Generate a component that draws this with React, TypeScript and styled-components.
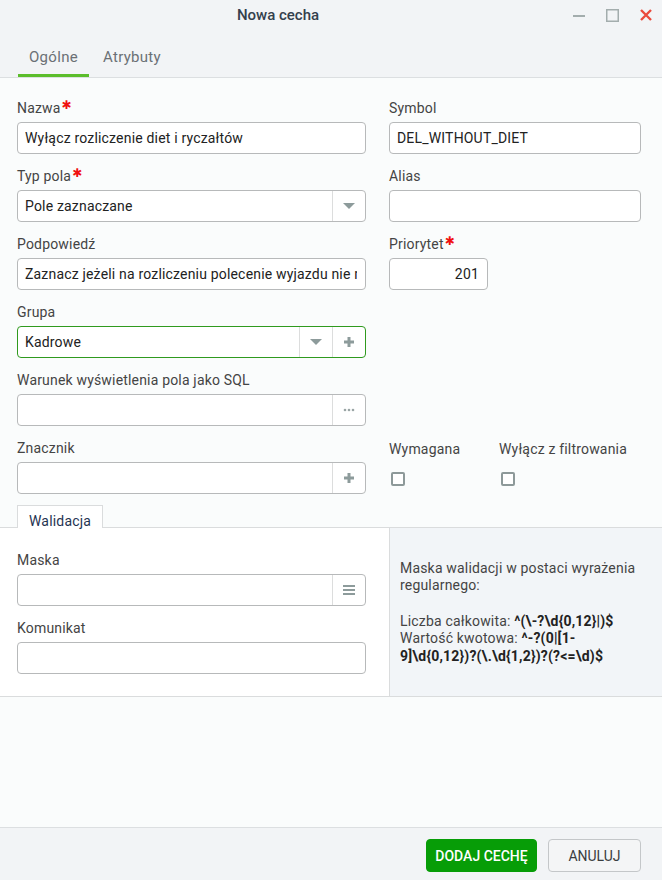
import styled, { createGlobalStyle } from "styled-components";

const GlobalStyle = createGlobalStyle`
  html, body {
    margin: 0;
    padding: 0;
    background: #fafcfc;
  }
  * {
    box-sizing: border-box;
  }
`;

const Window = styled.div`
  width: 662px;
  height: 880px;
  display: flex;
  flex-direction: column;
  background: #fafcfc;
  font-family: Roboto, "Liberation Sans", sans-serif;
  font-size: 14px;
  letter-spacing: 0.18px;
  color: #333;
  overflow: hidden;
`;

// title bar + tabs
const Header = styled.div`
  background: #f2f4f6;
  border-bottom: 1px solid #dcdfe1;
`;

const TitleBar = styled.div`
  height: 30px;
  display: flex;
  align-items: center;
`;

const Title = styled.div`
  flex: 1;
  text-align: center;
  font-size: 15px;
  font-weight: 500;
  color: #34404c;
  letter-spacing: 0;
`;

const WindowControls = styled.div`
  width: 106px;
  display: flex;
  align-items: center;
  gap: 21px;
  padding-left: 17px;
`;

const ControlButton = styled.svg`
  display: block;
`;

const TabBar = styled.div`
  display: flex;
  padding: 0 0 0 18px;
  margin-top: 13px;
  gap: 3px;
`;

const Tab = styled.div<{ $active?: boolean }>`
  padding: 5px 11px 8px;
  font-size: 15px;
  color: #6b7075;
  letter-spacing: 0.3px;
  border-bottom: 3px solid ${(p) => (p.$active ? "#5bbd2b" : "transparent")};
`;

const Content = styled.div`
  flex: 1;
  display: flex;
  flex-direction: column;
  padding-top: 20px;
`;

const FormGrid = styled.div`
  display: grid;
  grid-template-columns: 349px 252px;
  column-gap: 23px;
  row-gap: 12px;
  padding: 0 21px 0 17px;
`;

const Field = styled.div`
  display: flex;
  flex-direction: column;
`;

const Label = styled.div`
  height: 20px;
  line-height: 20px;
  margin-bottom: 4px;
  color: #444;
  font-size: 14px;
  white-space: nowrap;
`;

const Required = styled.span`
  color: #f01010;
  font-family: "DejaVu Sans", sans-serif;
  font-size: 12px;
  font-weight: bold;
  vertical-align: top;
  line-height: 14px;
  margin-left: 1px;
`;

const InputBox = styled.div<{ $focused?: boolean; $width?: number }>`
  height: 32px;
  width: ${(p) => (p.$width ? `${p.$width}px` : "100%")};
  display: flex;
  background: #fff;
  border: 1px solid ${(p) => (p.$focused ? "#2f9a1e" : "#b7b9ba")};
  border-radius: 4px;
  overflow: hidden;
`;

const TextInput = styled.input<{ $align?: string }>`
  flex: 1;
  min-width: 0;
  border: none;
  outline: none;
  background: transparent;
  padding: 0 8px 0 7px;
  font-family: Roboto, "Liberation Sans", sans-serif;
  font-size: 14px;
  letter-spacing: 0.18px;
  color: #222;
  text-align: ${(p) => p.$align || "left"};
`;

const AddonButton = styled.div`
  width: 33px;
  flex-shrink: 0;
  border-left: 1px solid #dcdddd;
  display: flex;
  align-items: center;
  justify-content: center;
`;

const Caret = styled.div`
  width: 0;
  height: 0;
  border-left: 6px solid transparent;
  border-right: 6px solid transparent;
  border-top: 6px solid #8d9b9b;
`;

const CheckboxGroup = styled.div`
  display: flex;
`;

const CheckboxField = styled.div<{ $width?: number }>`
  width: ${(p) => (p.$width ? `${p.$width}px` : "auto")};
  display: flex;
  flex-direction: column;
  padding-top: 1px;
`;

const Checkbox = styled.div`
  width: 14px;
  height: 14px;
  margin: 9px 0 0 2px;
  border: 2px solid #8d9999;
  border-radius: 2px;
  background: #fff;
`;

// validation section
const SectionTabs = styled.div`
  display: flex;
  padding-left: 17px;
  margin-top: 11px;
  margin-bottom: -1px;
  position: relative;
  z-index: 1;
`;

const SectionTab = styled.div`
  width: 86px;
  height: 23px;
  background: #fff;
  border: 1px solid #dadcdd;
  border-bottom: none;
  text-align: center;
  line-height: 30px;
  color: #1f3452;
  font-size: 14px;
`;

const SectionPanel = styled.div`
  display: flex;
  border-top: 1px solid #dadcdd;
  border-bottom: 1px solid #dadcdd;
  background: #fff;
`;

const SectionForm = styled.div`
  width: 389px;
  padding: 22px 23px 22px 17px;
  display: flex;
  flex-direction: column;
  gap: 12px;
`;

const HelpPanel = styled.div`
  flex: 1;
  background: #f2f5f8;
  border-left: 1px solid #dadcdd;
  padding: 0 10px;
  display: flex;
  align-items: center;
  color: #444;
  font-size: 14px;
  line-height: 17.6px;
`;

const HelpText = styled.div`
  padding-top: 1px;
`;

const Code = styled.b`
  color: #222;
`;

const Footer = styled.div`
  height: 53px;
  background: #f2f4f6;
  border-top: 1px solid #dcdfe1;
  display: flex;
  justify-content: flex-end;
  align-items: flex-start;
  gap: 11px;
  padding: 11px 21px 0 0;
`;

const Button = styled.button<{ $primary?: boolean }>`
  height: 33px;
  padding: 0;
  width: ${(p) => (p.$primary ? 111 : 93)}px;
  border-radius: 4px;
  border: 1px solid ${(p) => (p.$primary ? "#079d07" : "#c4c7c9")};
  background: ${(p) => (p.$primary ? "#079d07" : "#f4f5f6")};
  color: ${(p) => (p.$primary ? "#fff" : "#3a3d40")};
  font-family: Roboto, "Liberation Sans", sans-serif;
  font-size: 14px;
  font-weight: ${(p) => (p.$primary ? 500 : 400)};
  text-transform: uppercase;
  letter-spacing: 0;
`;

function PlusIcon() {
  return (
    <svg width="12" height="12" viewBox="0 0 12 12">
      <path d="M6 1v10M1 6h10" stroke="#8d9b9b" strokeWidth="3" />
    </svg>
  );
}

function DotsIcon() {
  return (
    <svg width="12" height="4" viewBox="0 0 12 4">
      <circle cx="2" cy="2" r="1.3" fill="#9aa5a5" />
      <circle cx="6" cy="2" r="1.3" fill="#9aa5a5" />
      <circle cx="10" cy="2" r="1.3" fill="#9aa5a5" />
    </svg>
  );
}

function MenuIcon() {
  return (
    <svg width="12" height="10" viewBox="0 0 12 10">
      <path d="M0 1h12M0 5h12M0 9h12" stroke="#8d9b9b" strokeWidth="2" />
    </svg>
  );
}

function Input({
  value = "",
  addons = [],
  focused,
  width,
  align,
}: {
  value?: string;
  addons?: React.ReactNode[];
  focused?: boolean;
  width?: number;
  align?: string;
}) {
  return (
    <InputBox $focused={focused} $width={width}>
      <TextInput value={value} readOnly $align={align} />
      {addons.map((a, i) => (
        <AddonButton key={i}>{a}</AddonButton>
      ))}
    </InputBox>
  );
}

export default function App() {
  return (
    <Window>
      <GlobalStyle />
      <Header>
        <TitleBar>
          <Title>Nowa cecha</Title>
          <WindowControls>
            <ControlButton width="12" height="12" viewBox="0 0 12 12">
              <path d="M0 7h12" stroke="#a3adad" strokeWidth="2" />
            </ControlButton>
            <ControlButton width="13" height="13" viewBox="0 0 13 13">
              <rect x="0.75" y="0.75" width="11.5" height="11.5" fill="none" stroke="#a3adad" strokeWidth="1.5" />
            </ControlButton>
            <ControlButton width="12" height="12" viewBox="0 0 12 12">
              <path d="M1 1l10 10M11 1L1 11" stroke="#ea4a3c" strokeWidth="2.4" />
            </ControlButton>
          </WindowControls>
        </TitleBar>
        <TabBar>
          <Tab $active>Ogólne</Tab>
          <Tab>Atrybuty</Tab>
        </TabBar>
      </Header>

      <Content>
        <FormGrid>
          <Field>
            <Label>
              Nazwa<Required>✱</Required>
            </Label>
            <Input value="Wyłącz rozliczenie diet i ryczałtów" />
          </Field>
          <Field>
            <Label>Symbol</Label>
            <Input value="DEL_WITHOUT_DIET" />
          </Field>

          <Field>
            <Label>
              Typ pola<Required>✱</Required>
            </Label>
            <Input value="Pole zaznaczane" addons={[<Caret />]} />
          </Field>
          <Field>
            <Label>Alias</Label>
            <Input />
          </Field>

          <Field>
            <Label>Podpowiedź</Label>
            <Input value="Zaznacz jeżeli na rozliczeniu polecenie wyjazdu nie mają być rozliczane diety i ryczałty" />
          </Field>
          <Field>
            <Label>
              Priorytet<Required>✱</Required>
            </Label>
            <Input value="201" width={99} align="right" />
          </Field>

          <Field>
            <Label>Grupa</Label>
            <Input value="Kadrowe" focused addons={[<Caret />, <PlusIcon />]} />
          </Field>
          <div />

          <Field>
            <Label>Warunek wyświetlenia pola jako SQL</Label>
            <Input addons={[<DotsIcon />]} />
          </Field>
          <div />

          <Field>
            <Label>Znacznik</Label>
            <Input addons={[<PlusIcon />]} />
          </Field>
          <CheckboxGroup>
            <CheckboxField $width={110}>
              <Label>Wymagana</Label>
              <Checkbox />
            </CheckboxField>
            <CheckboxField>
              <Label>Wyłącz z filtrowania</Label>
              <Checkbox />
            </CheckboxField>
          </CheckboxGroup>
        </FormGrid>

        <SectionTabs>
          <SectionTab>Walidacja</SectionTab>
        </SectionTabs>
        <SectionPanel>
          <SectionForm>
            <Field>
              <Label>Maska</Label>
              <Input addons={[<MenuIcon />]} />
            </Field>
            <Field>
              <Label>Komunikat</Label>
              <Input />
            </Field>
          </SectionForm>
          <HelpPanel>
            <HelpText>
              Maska walidacji w postaci wyrażenia regularnego:
              <br />
              <br />
              Liczba całkowita: <Code>^(\-?\d{"{0,12}"}|)$</Code>
              <br />
              Wartość kwotowa: <Code>^-?(0|[1-9]\d{"{0,12}"})?(\.\d{"{1,2}"})?(?&lt;=\d)$</Code>
            </HelpText>
          </HelpPanel>
        </SectionPanel>
      </Content>

      <Footer>
        <Button $primary>Dodaj cechę</Button>
        <Button>Anuluj</Button>
      </Footer>
    </Window>
  );
}
